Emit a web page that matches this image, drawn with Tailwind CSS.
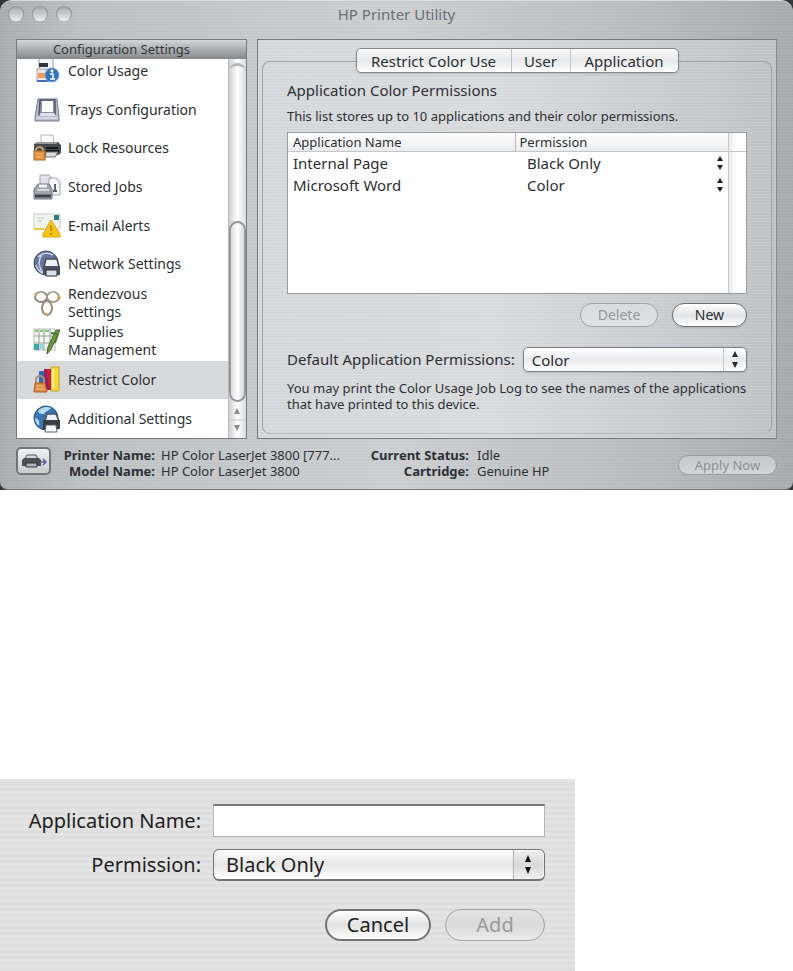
<!DOCTYPE html>
<html lang="en">

<head>
  <meta charset="UTF-8" />
  <meta name="viewport" content="width=device-width, initial-scale=1.0" />
  <script src="https://cdn.jsdelivr.net/npm/@tailwindcss/browser@4"></script>
  <title>HP Printer Utility</title>
</head>

<body class="bg-white font-['Noto_Sans','Open_Sans',sans-serif] text-[#2c2f33]">
  <section class="bg-[#33363b]">
    <div
      class="flex flex-col rounded-t-xl rounded-b-lg border-t border-[#d9dbdc] border-b border-b-[#77797c] bg-[repeating-linear-gradient(0deg,rgba(255,255,255,0.08)_0px,rgba(255,255,255,0.08)_1px,transparent_1px,transparent_3px),linear-gradient(90deg,#a9acae_0%,#bcbfc1_10%,#c6c9cb_35%,#cbcdcf_50%,#b9bbbd_80%,#a7aaad_100%)]">
      <!-- title bar -->
      <header class="grid h-[38px] grid-cols-[1fr_auto_1fr] items-start px-2 pt-1">
        <div class="flex gap-2 pt-px">
          <button aria-label="Close" class="size-4 rounded-full border border-[#94979a] border-b-[#c0c2c4] bg-linear-to-b from-[#a9acae] to-[#ebedee]"></button>
          <button aria-label="Minimize" class="size-4 rounded-full border border-[#94979a] border-b-[#c0c2c4] bg-linear-to-b from-[#a9acae] to-[#ebedee]"></button>
          <button aria-label="Zoom" class="size-4 rounded-full border border-[#94979a] border-b-[#c0c2c4] bg-linear-to-b from-[#a9acae] to-[#ebedee]"></button>
        </div>
        <h1 class="text-[15px] leading-[18px] text-[#6c6f73]">HP Printer Utility</h1>
      </header>

      <div class="flex gap-[10px] pr-4 pl-4">
        <!-- sidebar -->
        <aside class="flex h-[400px] w-[231px] shrink-0 flex-col border border-[#77797c] bg-white">
          <h2 class="h-[19px] shrink-0 bg-linear-to-b from-[#d3d5d6] to-[#86898c] pr-[20px] text-center text-[13px] leading-[18px] text-[#33363a]">Configuration Settings</h2>
          <div class="flex min-h-0 flex-1">
            <nav class="flex min-w-0 flex-1 flex-col justify-end overflow-hidden text-sm leading-[18px]">
              <div class="grid h-[386px] shrink-0 grid-rows-10">
                <a href="#" class="flex items-center gap-[7px] pl-4">
                  <svg class="size-7 shrink-0" viewBox="0 0 28 28">
                    <rect x="6" y="1" width="14" height="13" fill="#f4f5f6" stroke="#9a9da1" />
                    <rect x="6" y="6" width="9" height="4" fill="#33363d" />
                    <rect x="4" y="12" width="14" height="12" fill="#efe9e6" stroke="#a3a6aa" />
                    <rect x="5" y="16" width="9" height="5" fill="#f29a5c" />
                    <path d="M4 24h14" stroke="#4a6db0" stroke-width="2" />
                    <circle cx="19" cy="18" r="7" fill="#3474bd" stroke="#7fa6d6" />
                    <circle cx="19" cy="14" r="1.5" fill="#fff" />
                    <path d="M17 17h3v5M17 22h5" fill="none" stroke="#fff" stroke-width="1.5" />
                  </svg>
                  Color Usage
                </a>
                <a href="#" class="flex items-center gap-[7px] pl-4">
                  <svg class="size-7 shrink-0" viewBox="0 0 28 28">
                    <path d="M5 3h19l2 18v4H2v-4z" fill="#babdcb" stroke="#777a8d" />
                    <path d="M7 4h15v15H6z" fill="#8d90a3" stroke="#545769" stroke-width="1.5" />
                    <path d="M9 5h11v11H9z" fill="#fff" />
                    <path d="M8 17h13l2 3H6z" fill="#dfe1ea" />
                    <path d="M3 22h22" stroke="#eef0f5" />
                  </svg>
                  Trays Configuration
                </a>
                <a href="#" class="flex items-center gap-[7px] pl-4">
                  <svg class="size-7 shrink-0" viewBox="0 0 28 28">
                    <path d="M8 9V1h12l1 8z" fill="#fafafa" stroke="#b4b6b9" />
                    <path d="M1 10l4-2h20l3 3v8l-3 2H1z" fill="#46494e" />
                    <path d="M3 9h21" stroke="#94979c" stroke-width="2" />
                    <path d="M13 14h12M13 17h13" stroke="#17191c" stroke-width="2" />
                    <path d="M13 18h12l-3 5H12z" fill="#d8dade" stroke="#6b6e73" />
                    <path d="M3 17v-2a4 4 0 0 1 7 0v2" fill="none" stroke="#c9a26e" stroke-width="2" />
                    <rect x="1" y="17" width="11" height="9" fill="#df9140" stroke="#a8672b" />
                    <path d="M3 20h7M3 23h7" stroke="#f2bd7c" />
                  </svg>
                  Lock Resources
                </a>
                <a href="#" class="flex items-center gap-[7px] pl-4">
                  <svg class="size-7 shrink-0" viewBox="0 0 28 28">
                    <path d="M7 2h9l3 3v14H7z" fill="#e0e1e6" stroke="#a3a5ad" />
                    <path d="M16 5h7l4 4v13H16z" fill="#f5f6f8" stroke="#9da0a8" />
                    <path d="M22 11v7M20 18h4" stroke="#5c5f6a" stroke-width="2" />
                    <path d="M5 11h11l3 5v10H1V16z" fill="#a1a3ac" stroke="#73757f" />
                    <path d="M6 13h8" stroke="#f0f0f3" stroke-width="3" />
                    <path d="M4 17h12" stroke="#d8d9de" stroke-width="2" />
                    <path d="M2 23h16" stroke="#41434c" stroke-width="3" />
                  </svg>
                  Stored Jobs
                </a>
                <a href="#" class="flex items-center gap-[7px] pl-4">
                  <svg class="size-7 shrink-0" viewBox="0 0 28 28">
                    <rect x="1" y="2" width="26" height="15" fill="#f2f4ef" stroke="#cdd0cb" />
                    <rect x="21" y="3" width="5" height="5" fill="#2e7d83" />
                    <path d="M4 6h7M4 9h5" stroke="#c3c6c2" />
                    <path d="M1 17h10" stroke="#e8c84a" stroke-width="2" />
                    <path d="M18 8l9 14v3H10v-3z" fill="#f5c518" stroke="#dca60f" stroke-linejoin="round" />
                    <path d="M18 13v6M18 21v2" stroke="#c48d0c" stroke-width="2" />
                  </svg>
                  E-mail Alerts
                </a>
                <a href="#" class="flex items-center gap-[7px] pl-4">
                  <svg class="size-7 shrink-0" viewBox="0 0 28 28">
                    <circle cx="13" cy="13" r="12" fill="#68749b" stroke="#3c4668" />
                    <path d="M5 7c4-4 10-5 15-2M3 15c2 6 5 8 8 9M10 3c-5 6-5 13 0 20" fill="none" stroke="#c8d0e6" stroke-width="1.5" />
                    <path d="M13 9h11l2 8H11z" fill="#f0f2f6" stroke="#444958" stroke-width="1.5" />
                    <path d="M10 16h17v9H10z" fill="#4a5060" />
                    <path d="M13 20h11v6H13z" fill="#dcdfe6" stroke="#2d313c" />
                  </svg>
                  Network Settings
                </a>
                <a href="#" class="flex items-center gap-[7px] pl-4">
                  <svg class="size-7 shrink-0" viewBox="0 0 28 28" fill="none">
                    <ellipse cx="8" cy="8" rx="6" ry="5" stroke="#8f8578" stroke-width="2" />
                    <ellipse cx="20" cy="8" rx="6" ry="5" stroke="#a19688" stroke-width="2" />
                    <ellipse cx="14" cy="19" rx="5" ry="7" stroke="#9a8c7a" stroke-width="2" />
                    <path d="M4 6c2-3 6-3 8 0M16 6c2-3 6-3 8 0M11 18c0-4 5-5 7-1" stroke="#ede8df" />
                    <circle cx="26" cy="9" r="1.5" fill="#d98c3f" />
                    <circle cx="3" cy="5" r="1.5" fill="#d9a566" />
                    <circle cx="13" cy="25" r="1.5" fill="#d9a566" />
                  </svg>
                  <span>Rendezvous<br>Settings</span>
                </a>
                <a href="#" class="flex items-center gap-[7px] pl-4">
                  <svg class="size-7 shrink-0" viewBox="0 0 28 28">
                    <rect x="1" y="2" width="21" height="21" fill="#f3f6f2" stroke="#b8bcb8" />
                    <path d="M1 9h21M1 16h21M6 2v21M11 2v21M17 2v21" stroke="#96a39a" />
                    <path d="M2 4h3M7 4h3M12 4h4" stroke="#8fc07a" stroke-width="2" />
                    <rect x="1" y="17" width="5" height="6" fill="#3fa9b5" />
                    <rect x="7" y="17" width="4" height="5" fill="#9ed0d6" />
                    <path d="M27 3l-9 19-4 5 1-7 8-17z" fill="#6f9a3c" stroke="#40622a" />
                    <path d="M18 6l7 1-3 9" fill="none" stroke="#4f7a35" stroke-width="2" />
                  </svg>
                  <span>Supplies<br>Management</span>
                </a>
                <a href="#" aria-current="page" class="flex items-center gap-[7px] bg-[#d7d8d9] pl-4">
                  <svg class="size-7 shrink-0" viewBox="0 0 28 28">
                    <path d="M18 1h8v24h-8z" fill="#f8d832" stroke="#bda63a" />
                    <path d="M19 3h2v20h-2z" fill="#fdf3a4" />
                    <path d="M11 3h7v21h-7z" fill="#c8203f" />
                    <path d="M12 3l3 20" stroke="#8c1d6b" stroke-width="2" />
                    <path d="M6 5h5v13H6z" fill="#2f6db2" />
                    <path d="M3 17v-3a4 4 0 0 1 8 0v3" fill="none" stroke="#a39285" stroke-width="2" />
                    <path d="M2 17h10l2 9H1z" fill="#e08a48" stroke="#b05f2b" />
                    <path d="M3 20h8M3 23h9" stroke="#f3bd86" />
                  </svg>
                  Restrict Color
                </a>
                <a href="#" class="flex items-center gap-[7px] pl-4">
                  <svg class="size-7 shrink-0" viewBox="0 0 28 28">
                    <circle cx="13" cy="13" r="12" fill="#3b74b4" stroke="#285384" />
                    <path d="M5 6c3-4 9-5 13-3-3 4-5 2-7 6-3 0-5 0-6-3zM2 13c4 1 5 4 4 8-2-2-4-4-4-8z" fill="#b9d8ee" />
                    <path d="M14 9h9l3 7H12z" fill="#eff1f4" stroke="#51555e" stroke-width="1.5" />
                    <path d="M10 15h17v9H10z" fill="#393d45" />
                    <path d="M13 20h10l1 7H12z" fill="#f6f7f8" stroke="#5d6068" />
                  </svg>
                  Additional Settings
                </a>
              </div>
            </nav>
            <!-- scroll bar -->
            <div class="flex w-[18px] shrink-0 flex-col border-l border-[#b9bbbd] bg-linear-to-r from-[#cfd1d3] via-white to-[#d9dbdd]">
              <div class="h-[162px] shrink-0 pt-1">
                <div class="h-4 rounded-t-full border-t-3 border-[#b4b6b9]"></div>
              </div>
              <div class="flex-1 rounded-full border-2 border-[#96989c] bg-linear-to-r from-[#dcdddf] via-white to-[#d6d8da]"></div>
              <svg class="h-9 w-full shrink-0" viewBox="0 0 17 36">
                <path d="M0 18h17" stroke="#c9cbcd" />
                <path d="M8 6l3 6H5zM8 29l3-6H5z" fill="#8b8d90" />
              </svg>
            </div>
          </div>
        </aside>

        <!-- application permissions -->
        <main
          class="flex min-w-0 flex-1 flex-col border border-[#77797c] border-r-[#8b8e91] bg-[repeating-linear-gradient(0deg,rgba(255,255,255,0.12)_0px,rgba(255,255,255,0.12)_1px,transparent_1px,transparent_3px),linear-gradient(90deg,#d4d7d9_0%,#d8dadc_45%,#bfc2c5_100%)] px-1 pt-2 pb-1">
          <div class="relative z-10 flex justify-center">
            <div role="tablist" class="flex h-[25px] divide-x divide-[#c3c5c7] rounded-[5px] border border-[#85888b] bg-linear-to-b from-[#fafafa] via-[#e7e8ea] to-white text-[15px] leading-[22px] shadow-sm">
              <button role="tab" class="w-[155px]">Restrict Color Use</button>
              <button role="tab" class="w-[59px]">User</button>
              <button role="tab" aria-selected="true" class="w-[107px]">Application</button>
            </div>
          </div>
          <div class="-mt-3 flex-1 rounded-lg border border-[#a0a3a6] border-b-[#b7babc] px-6 pt-[18px]">
            <h2 class="text-[15px] leading-5">Application Color Permissions</h2>
            <p class="mt-[6px] text-[13px] leading-5">This list stores up to 10 applications and their color permissions.</p>
            <div class="mt-[6px] h-[162px] border border-[#999c9f] bg-white">
              <div class="flex h-full">
                <table class="h-fit flex-1 table-fixed border-collapse text-left">
                  <thead>
                    <tr class="h-[18px] border-b border-[#c4c6c8] bg-linear-to-b from-white to-[#ebecee] text-[13px] leading-[18px]">
                      <th class="w-[227px] border-r border-[#b7b9bb] pl-[5px] font-normal">Application Name</th>
                      <th class="pl-1 font-normal">Permission</th>
                    </tr>
                  </thead>
                  <tbody class="text-[15px] leading-5">
                    <tr class="h-[22px]">
                      <td class="pl-[5px]">Internal Page</td>
                      <td class="pr-1 pl-3">
                        <div class="flex items-center">
                          <select aria-label="Permission for Internal Page" class="flex-1 appearance-none">
                            <option>Black Only</option>
                            <option>Color</option>
                          </select>
                          <svg class="h-4 w-2" viewBox="0 0 8 16"><path d="M4 1l3 5H1zM4 15l3-5H1z" fill="#222" /></svg>
                        </div>
                      </td>
                    </tr>
                    <tr class="h-[22px]">
                      <td class="pl-[5px]">Microsoft Word</td>
                      <td class="pr-1 pl-3">
                        <div class="flex items-center">
                          <select aria-label="Permission for Microsoft Word" class="flex-1 appearance-none">
                            <option>Color</option>
                            <option>Black Only</option>
                          </select>
                          <svg class="h-4 w-2" viewBox="0 0 8 16"><path d="M4 1l3 5H1zM4 15l3-5H1z" fill="#222" /></svg>
                        </div>
                      </td>
                    </tr>
                  </tbody>
                </table>
                <div class="w-[18px] border-l border-[#c9cbcd] bg-linear-to-r from-[#e9eaeb] to-white to-40%">
                  <div class="h-[19px] border-b border-[#c4c6c8]"></div>
                </div>
              </div>
            </div>
            <div class="mt-[9px] flex justify-end gap-[14px] text-sm leading-5">
              <button disabled class="h-6 w-[78px] rounded-full border border-[#a1a4a6] bg-linear-to-b from-[#d9dbdc] to-[#e0e2e3] text-[#94979a]">Delete</button>
              <button class="h-6 w-[75px] rounded-full border border-[#6c6f72] bg-linear-to-b from-white via-[#e3e4e6] to-white shadow-sm">New</button>
            </div>
            <div class="mt-5 flex items-center gap-2">
              <label for="default_permission" class="shrink-0 text-[15px]">Default Application Permissions:</label>
              <div class="relative min-w-0 flex-1">
                <select id="default_permission" class="block h-[25px] w-full appearance-none rounded-[5px] border border-[#7b7e81] bg-linear-to-b from-white via-[#eaebed] to-white pl-2 text-[15px] leading-5 shadow-sm">
                  <option>Color</option>
                  <option>Black Only</option>
                </select>
                <svg class="pointer-events-none absolute inset-y-0 right-0 h-full w-6" viewBox="0 0 24 25">
                  <path d="M.5 1v23" stroke="#c6c8ca" />
                  <path d="M12 4l3 6H9zM12 21l3-6H9z" fill="#2b2d30" />
                </svg>
              </div>
            </div>
            <p class="mt-2 text-[13px] leading-4 whitespace-nowrap">You may print the Color Usage Job Log to see the names of the applications<br>that have printed to this device.</p>
          </div>
        </main>
      </div>

      <!-- status bar -->
      <footer class="flex h-[50px] items-start pt-2 pr-4 pl-4 text-[13px] leading-4">
        <button aria-label="Select printer" class="flex h-7 w-[35px] items-center justify-center rounded-[5px] border-2 border-[#737679] bg-linear-to-b from-[#f0f1f2] to-[#c9cbcd]">
          <svg class="h-4 w-7" viewBox="0 0 28 16">
            <path d="M5 6l2-4h9l2 4z" fill="#d6d8da" stroke="#505256" />
            <path d="M2 7l2-2h15l2 2v6H2z" fill="#4d4f53" />
            <path d="M6 10h11v4H6z" fill="#b1b3b6" stroke="#333" />
            <path d="M20 9h6M23 6l3 3-3 3" fill="none" stroke="#5960a8" stroke-width="1.5" />
          </svg>
        </button>
        <dl class="grid grid-cols-[104px_200px] gap-x-[6px] whitespace-nowrap">
          <dt class="text-right font-bold">Printer Name:</dt>
          <dd>HP Color LaserJet 3800 [777...</dd>
          <dt class="text-right font-bold">Model Name:</dt>
          <dd>HP Color LaserJet 3800</dd>
        </dl>
        <dl class="grid grid-cols-[108px_auto] gap-x-[8px] whitespace-nowrap">
          <dt class="text-right font-bold">Current Status:</dt>
          <dd>Idle</dd>
          <dt class="text-right font-bold">Cartridge:</dt>
          <dd>Genuine HP</dd>
        </dl>
        <button disabled class="mt-2 ml-auto h-5 w-[99px] rounded-full border border-[#9b9ea1] bg-linear-to-b from-[#c4c7c9] to-[#d3d5d7] text-[#8d9093]">Apply Now</button>
      </footer>
    </div>
  </section>

  <!-- add application dialog -->
  <form
    class="mt-[289px] w-full max-w-[575px] bg-[repeating-linear-gradient(180deg,#e3e3e3_0px,#e3e3e3_3px,#dedede_3px,#dedede_6px)] pt-[25px] pr-[30px] pb-[30px] pl-5 text-xl text-[#1d1d1d]">
    <div class="grid grid-cols-[181px_1fr] items-center gap-x-3 gap-y-3">
      <label for="application_name" class="text-right">Application Name:</label>
      <input id="application_name" type="text" class="h-[33px] border border-[#b4b4b4] border-t-2 border-t-[#777] bg-white px-2" />
      <label for="permission" class="text-right">Permission:</label>
      <div class="relative">
        <select id="permission" class="block h-8 w-full appearance-none rounded-md border border-b-2 border-[#747474] bg-linear-to-b from-white via-[#e6e6e6] to-white pl-3 leading-7">
          <option>Black Only</option>
          <option>Color</option>
        </select>
        <svg class="pointer-events-none absolute inset-y-0 right-0 h-full w-8" viewBox="0 0 32 32">
          <path d="M0 2h26q4 0 4 4v20q0 4-4 4H0z" fill="#000" fill-opacity=".06" />
          <path d="M.5 1v29" stroke="#b0b0b0" />
          <path d="M15 6l3 7h-6zM15 25l3-7h-6z" fill="#111" />
        </svg>
      </div>
    </div>
    <div class="mt-7 flex justify-end gap-[14px] leading-7">
      <button type="button" class="h-8 w-[106px] rounded-full border-2 border-[#737373] bg-linear-to-b from-white via-[#e2e2e2] to-white">Cancel</button>
      <button type="submit" disabled class="h-8 w-[100px] rounded-full border border-[#a5a5a5] bg-linear-to-b from-[#e4e4e4] via-[#dadada] to-[#ebebeb] text-[#999]">Add</button>
    </div>
  </form>
</body>

</html>
